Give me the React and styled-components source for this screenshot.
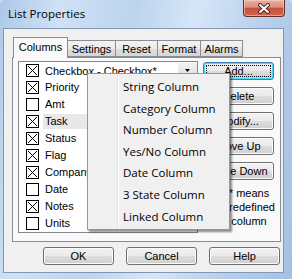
import React from 'react'
import styled, { createGlobalStyle, css } from 'styled-components'

const Global = createGlobalStyle`
    html, body {
        margin: 0;
        padding: 0;
        background: #c4d9ef;
    }
    body {
        width: 292px;
        height: 279px;
        overflow: hidden;
    }
`

const Window = styled.div`
    position: relative;
    box-sizing: border-box;
    width: 292px;
    height: 279px;
    display: flex;
    flex-direction: column;
    padding: 0 8px 6px 3px;
    border-radius: 6px 6px 0 0;
    background: linear-gradient(100deg, #adc8e8 0%, #cfe1f5 18%, #bcd4ee 40%, #d6e6f7 58%, #b6cfeb 80%, #a3c0e4 100%);
    font-family: "Liberation Sans", Arial, sans-serif;
    font-size: 11px;
    color: #000;
`

const TitleBar = styled.div`
    height: 28px;
    display: flex;
    justify-content: space-between;
    align-items: flex-start;
`

const Title = styled.div`
    margin: 6px 0 0 5px;
    font-family: "Open Sans", "Noto Sans", sans-serif;
    font-size: 11.5px;
    color: #000;
`

const CloseButton = styled.div`
    box-sizing: border-box;
    width: 42px;
    height: 17px;
    margin-right: -1px;
    display: flex;
    align-items: center;
    justify-content: center;
    border: 1px solid #6b2d28;
    border-top: none;
    border-radius: 0 0 4px 4px;
    background: linear-gradient(to bottom, #eab0a2 0%, #dc8f7e 45%, #c6503b 52%, #d2674e 100%);
    box-shadow: inset 0 0 0 1px rgba(255, 220, 210, 0.5);
`

const Client = styled.div`
    flex: 1;
    display: flex;
    flex-direction: column;
    padding: 8px 3px 7px 8px;
    background: #f0f0f0;
    border: 1px solid #8096b4;
`

const Tabs = styled.div`
    display: flex;
    align-items: flex-end;
    height: 20px;
    padding-left: 1px;
`

const Tab = styled.div`
    box-sizing: border-box;
    width: ${p => p.$width}px;
    height: ${p => (p.$active ? '21px' : '17px')};
    padding-top: ${p => (p.$active ? '3px' : '2px')};
    margin-bottom: ${p => (p.$active ? '-1px' : '0')};
    margin-right: -1px;
    text-align: center;
    border: 1px solid #898c95;
    border-bottom: ${p => (p.$active ? 'none' : '1px solid #898c95')};
    background: ${p =>
        p.$active
            ? '#f9f9f9'
            : 'linear-gradient(to bottom, #f3f3f3 0%, #ebebeb 50%, #dedede 51%, #d6d6d6 100%)'};
    position: relative;
    z-index: ${p => (p.$active ? 1 : 0)};
`

const Panel = styled.div`
    box-sizing: border-box;
    width: 269px;
    height: 185px;
    display: flex;
    gap: 5px;
    padding: 3px 6px 0 5px;
    background: #f9f9f9;
    border: 1px solid #898c95;
`

const ListBox = styled.div`
    box-sizing: border-box;
    width: 180px;
    height: 172px;
    background: #fff;
    border: 1px solid #828790;
    overflow: hidden;
`

const Row = styled.div`
    height: 17px;
    display: flex;
    align-items: center;
    padding-left: 7px;
    gap: 4px;
    color: #000;
`

const Label = styled.div`
    flex: 1;
    height: 15px;
    line-height: 15px;
    padding-left: 2px;
    white-space: nowrap;
    background: ${p => (p.$highlight ? '#e8e8e8' : 'transparent')};
`

const Combo = styled.div`
    flex: 1;
    height: 16px;
    display: flex;
    align-items: center;
    padding-left: 2px;
    white-space: nowrap;
    overflow: hidden;
`

const ComboText = styled.span`
    flex: 1;
    overflow: hidden;
`

const ComboArrow = styled.div`
    width: 19px;
    height: 16px;
    display: flex;
    align-items: center;
    justify-content: center;
    background: linear-gradient(to bottom, #f2f2f2, #dcdcdc);
`

const Side = styled.div`
    width: 71px;
    display: flex;
    flex-direction: column;
    gap: 7px;
    padding-top: 1px;
`

const Button = styled.button`
    position: relative;
    box-sizing: border-box;
    width: 71px;
    height: 18px;
    padding: 0;
    border: 1px solid #707070;
    border-radius: 3px;
    background: linear-gradient(to bottom, #f2f2f2 0%, #ebebeb 48%, #dddddd 52%, #cfcfcf 100%);
    box-shadow: inset 0 0 0 1px #fbfbfb;
    font-family: "Liberation Sans", Arial, sans-serif;
    font-size: 11px;
    color: #000;
    line-height: 15px;

    ${p =>
        p.$focused &&
        css`
            border-color: #3c7fb1;
            box-shadow: inset 0 0 0 1px #4fd3f8;
            &::after {
                content: '';
                position: absolute;
                inset: 2px;
                border: 1px dotted #000;
            }
        `}
`

const Note = styled.div`
    width: 60px;
    align-self: flex-end;
    margin: -1px -5px 0 0;
    text-align: center;
    line-height: 14px;
`

const Footer = styled.div`
    display: flex;
    justify-content: flex-end;
    gap: 12px;
    margin-top: 5px;
`

const Menu = styled.div`
    position: absolute;
    left: 87px;
    top: 73px;
    box-sizing: border-box;
    width: 143px;
    height: 157px;
    padding: 2px 2px;
    border: 1px solid #979797;
    background: linear-gradient(to right, #f0f0f0 0, #f0f0f0 29px, #e2e3e3 29px, #e2e3e3 30px, #ffffff 30px, #ffffff 31px, #f0f0f0 31px);
    box-shadow: 2px 2px 2px rgba(0, 0, 0, 0.45);
    font-family: "Open Sans", "Noto Sans", sans-serif;
    font-size: 11.5px;
    color: #000;
    z-index: 5;
`

const MenuItem = styled.div`
    height: 21.6px;
    line-height: 21.6px;
    padding-left: 33px;
    white-space: nowrap;
`

const CheckBox = ({ checked }) => (
    <svg width="13" height="13" viewBox="0 0 13 13">
        <rect x="0.5" y="0.5" width="12" height="12" fill="#fff" stroke="#000" />
        {checked && <path d="M2 2 L11 11 M11 2 L2 11" stroke="#000" strokeWidth="1" />}
    </svg>
)

const columns = [
    { name: 'Priority', checked: true },
    { name: 'Amt', checked: false },
    { name: 'Task', checked: true, highlight: true },
    { name: 'Status', checked: true },
    { name: 'Flag', checked: true },
    { name: 'Company', checked: true },
    { name: 'Date', checked: false },
    { name: 'Notes', checked: true },
    { name: 'Units', checked: false },
]

const menuItems = [
    'String Column',
    'Category Column',
    'Number Column',
    'Yes/No Column',
    'Date Column',
    '3 State Column',
    'Linked Column',
]

const tabs = [
    { name: 'Columns', width: 55 },
    { name: 'Settings', width: 49 },
    { name: 'Reset', width: 43 },
    { name: 'Format', width: 44 },
    { name: 'Alarms', width: 43 },
]

const App = () => {
    return (
        <>
            <Global />
            <Window>
                <TitleBar>
                    <Title>List Properties</Title>
                    <CloseButton>
                        <svg width="14" height="11" viewBox="0 0 14 11">
                            <path d="M3 2 L11 9 M11 2 L3 9" stroke="#4b2622" strokeWidth="4" strokeLinecap="round" />
                            <path d="M3 2 L11 9 M11 2 L3 9" stroke="#fff" strokeWidth="2" strokeLinecap="round" />
                        </svg>
                    </CloseButton>
                </TitleBar>
                <Client>
                    <Tabs>
                        {tabs.map((t, i) => (
                            <Tab key={t.name} $active={i === 0} $width={t.width}>{t.name}</Tab>
                        ))}
                    </Tabs>
                    <Panel>
                        <ListBox>
                            <Row>
                                <CheckBox checked />
                                <Combo>
                                    <ComboText>Checkbox - Checkbox*</ComboText>
                                    <ComboArrow>
                                        <svg width="5" height="3" viewBox="0 0 5 3">
                                            <path d="M0 0 L5 0 L2.5 3 Z" fill="#000" />
                                        </svg>
                                    </ComboArrow>
                                </Combo>
                            </Row>
                            {columns.map(c => (
                                <Row key={c.name}>
                                    <CheckBox checked={c.checked} />
                                    <Label $highlight={c.highlight}>{c.name}</Label>
                                </Row>
                            ))}
                        </ListBox>
                        <Side>
                            <Button $focused>Add...</Button>
                            <Button>Delete</Button>
                            <Button>Modify...</Button>
                            <Button>Move Up</Button>
                            <Button>Move Down</Button>
                            <Note>* means predefined column</Note>
                        </Side>
                    </Panel>
                    <Footer>
                        <Button>OK</Button>
                        <Button>Cancel</Button>
                        <Button>Help</Button>
                    </Footer>
                </Client>
                <Menu>
                    {menuItems.map(m => (
                        <MenuItem key={m}>{m}</MenuItem>
                    ))}
                </Menu>
            </Window>
        </>
    )
}

export default App
